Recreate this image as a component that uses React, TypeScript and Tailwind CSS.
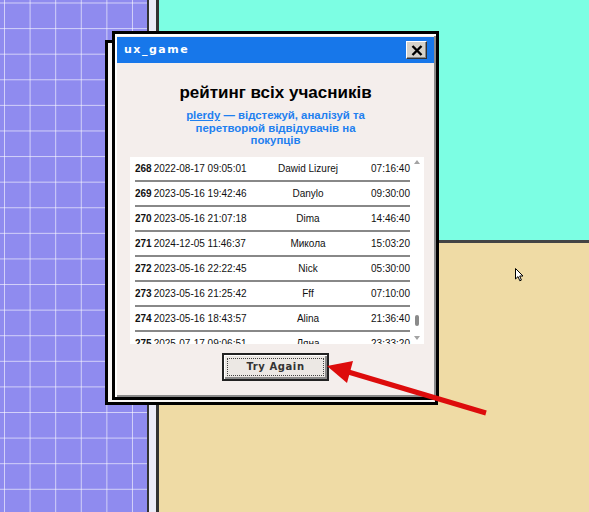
const rows = [
  { n: 268, date: "2022-08-17 09:05:01", name: "Dawid Lizurej", time: "07:16:40" },
  { n: 269, date: "2023-05-16 19:42:46", name: "Danylo", time: "09:30:00" },
  { n: 270, date: "2023-05-16 21:07:18", name: "Dima", time: "14:46:40" },
  { n: 271, date: "2024-12-05 11:46:37", name: "Микола", time: "15:03:20" },
  { n: 272, date: "2023-05-16 22:22:45", name: "Nick", time: "05:30:00" },
  { n: 273, date: "2023-05-16 21:25:42", name: "Fff", time: "07:10:00" },
  { n: 274, date: "2023-05-16 18:43:57", name: "Alina", time: "21:36:40" },
  { n: 275, date: "2025-07-17 09:06:51", name: "Ляна", time: "23:33:20" },
]

export default function App() {
  return (
    <div className="relative w-[589px] h-[512px] overflow-hidden flex font-['Liberation_Sans',Arial,sans-serif]">
      {/* desktop: grid panel, divider, cyan + sand panels */}
      <div className="w-[147px] h-full bg-[#8f8bef] [background-image:linear-gradient(to_right,rgba(255,255,255,0.6)_1.2px,transparent_1.2px),linear-gradient(to_bottom,rgba(255,255,255,0.6)_1.2px,transparent_1.2px)] [background-size:25.6px_25.6px] [background-position:4px_2.5px]" />
      <div className="w-[12px] h-full border-l-2 border-r-[3px] border-[#333] bg-[#ececf8]" />
      <div className="flex-1 flex flex-col">
        <div className="h-[240px] bg-[#7cfee3]" />
        <div className="flex-1 border-t-[3px] border-[#444] bg-[#efdba5]" />
      </div>

      {/* window */}
      <div className="absolute left-[105px] top-[40px] w-[333px] h-[365px] border-[3px] border-black bg-[#f8f6f5]" />
      <div className="absolute left-[112px] top-[31px] w-[327px] h-[369px] border-[3px] border-black bg-[#f4eeec] shadow-[inset_2px_2px_0_#fff,inset_-2px_-2px_0_#8a8a8a] pt-[3px] px-[2px] flex flex-col">
        <div className="h-[26px] bg-[#1777ea] flex items-center justify-between pl-[7px] pr-[7px]">
          <span className="text-white text-[11px] font-bold tracking-[1.5px] font-['DejaVu_Sans',sans-serif]">ux_game</span>
          <div className="w-[21px] h-[18px] bg-[#d6d2ca] border border-t-white border-l-white border-b-[#333] border-r-[#333] shadow-[inset_-1px_-1px_0_#888] flex items-center justify-center">
            <svg width="12" height="11" viewBox="0 0 12 11">
              <path d="M1.5 1 L10.5 10 M10.5 1 L1.5 10" stroke="#000" strokeWidth="2.4" />
            </svg>
          </div>
        </div>

        <h1 className="mt-[19px] text-center text-[17px] leading-[21px] font-bold text-black">рейтинг всіх учасників</h1>
        <p className="mt-[6px] text-center text-[11.4px] leading-[12.5px] font-bold text-[#1f80f0]">
          <span className="underline">plerdy</span> — відстежуй, аналізуй та
          <br />
          перетворюй відвідувачів на
          <br />
          покупців
        </p>

        {/* scores list */}
        <div className="mt-[10px] ml-[13px] w-[294px] h-[187px] bg-white overflow-hidden flex">
          <div className="w-[280px] pl-[5px] flex flex-col">
            {rows.map((r) => (
              <div key={r.n} className="shrink-0 h-[25px] border-b-2 border-[#888] flex items-center text-[10px] text-[#111]">
                <div className="w-[121px] whitespace-nowrap">
                  <span className="font-bold">{r.n}</span>
                  <span className="ml-[2px]">{r.date}</span>
                </div>
                <div className="flex-1 text-center whitespace-nowrap">{r.name}</div>
                <div className="w-[50px] text-right">{r.time}</div>
              </div>
            ))}
          </div>
          <div className="flex-1 flex flex-col items-center pt-[3px] pb-[4px]">
            <svg width="6" height="4" viewBox="0 0 6 4">
              <path d="M0 4 L3 0 L6 4 Z" fill="#a3a3a3" />
            </svg>
            <div className="mt-auto mb-[10px] w-[4px] h-[11px] rounded-full bg-[#8a8a8a]" />
            <svg width="6" height="4" viewBox="0 0 6 4">
              <path d="M0 0 L3 4 L6 0 Z" fill="#a3a3a3" />
            </svg>
          </div>
        </div>

        <button className="mt-[9px] mx-auto w-[107px] h-[28px] border-2 border-[#222] bg-[#ece8e4] shadow-[inset_1px_1px_0_#fff,inset_-2px_-2px_0_#8a8a8a] p-[3px]">
          <div className="w-full h-full border border-dotted border-[#444] flex items-center justify-center text-[10px] font-bold tracking-[0.6px] text-[#333] font-['DejaVu_Sans',sans-serif]">
            Try Again
          </div>
        </button>
      </div>

      {/* red pointer arrow */}
      <svg className="absolute left-0 top-0 pointer-events-none" width="589" height="512" viewBox="0 0 589 512">
        <line x1="486" y1="413" x2="345" y2="371" stroke="#dd0c0c" strokeWidth="5" />
        <polygon points="327,366 353,361 347,383" fill="#dd0c0c" />
      </svg>

      {/* mouse cursor */}
      <svg className="absolute left-[515px] top-[268px] pointer-events-none" width="10" height="14" viewBox="0 0 10 14">
        <path d="M0.5 0.5 L0.5 11 L3 8.6 L4.8 12.8 L6.4 12.1 L4.7 8 L8 8 Z" fill="#fff" stroke="#000" strokeWidth="1" strokeLinejoin="round" />
      </svg>
    </div>
  )
}
